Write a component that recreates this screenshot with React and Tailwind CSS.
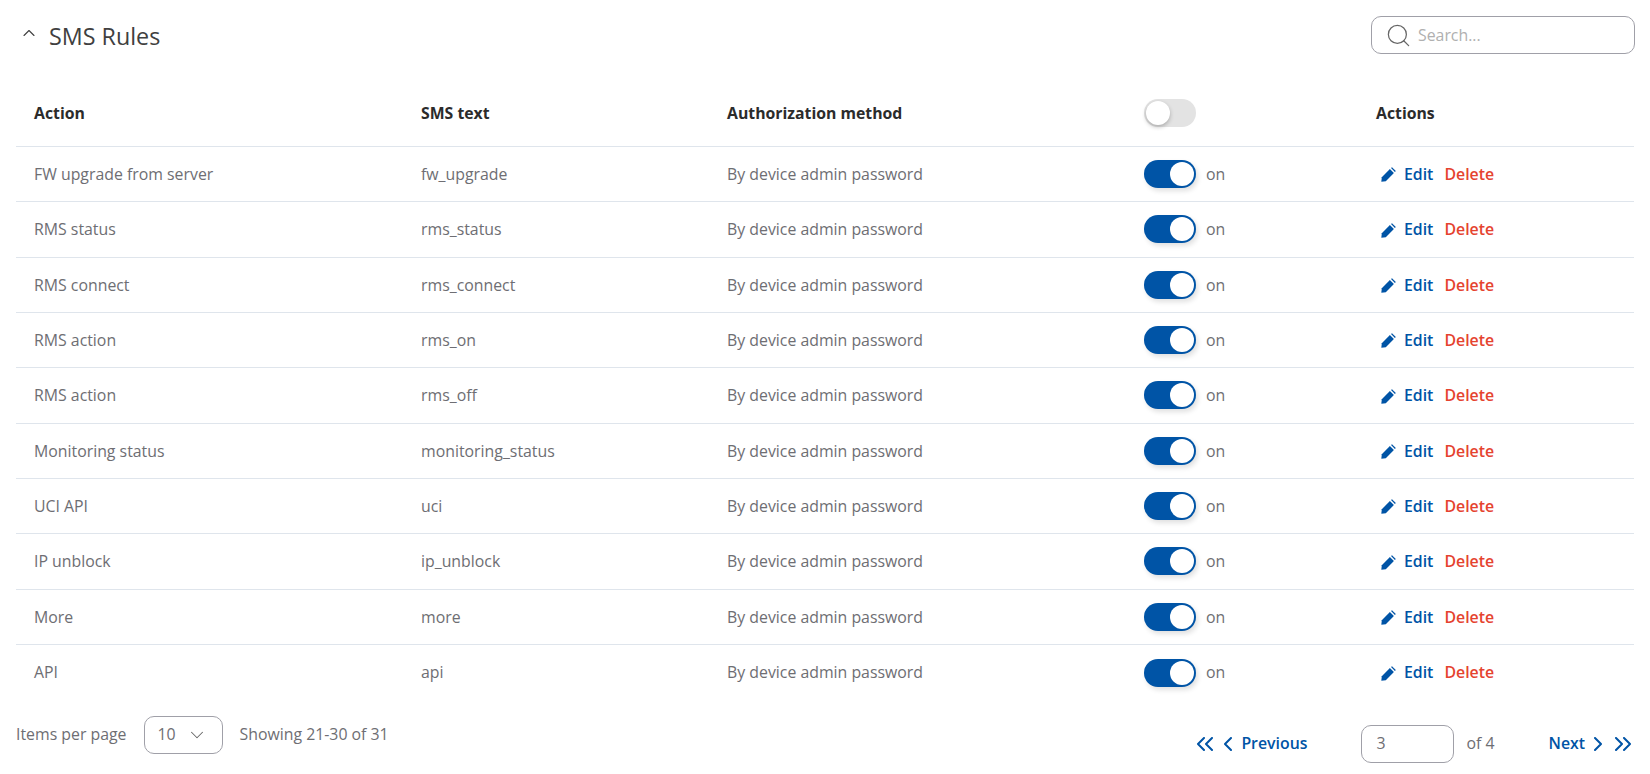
import React from 'react';
import { ChevronUp, ChevronDown, Search } from 'lucide-react';

const rows = [
  ['FW upgrade from server', 'fw_upgrade'],
  ['RMS status', 'rms_status'],
  ['RMS connect', 'rms_connect'],
  ['RMS action', 'rms_on'],
  ['RMS action', 'rms_off'],
  ['Monitoring status', 'monitoring_status'],
  ['UCI API', 'uci'],
  ['IP unblock', 'ip_unblock'],
  ['More', 'more'],
  ['API', 'api'],
];

const PencilIcon = () => (
  <svg width="15" height="15" viewBox="0 0 15 15" className="fill-[#0054a6]">
    <path d="M0.3 14.7 L0.8 10.2 L8.9 2.1 L12.9 6.1 L4.8 14.2 Z" />
    <path d="M10 1.1 L11 0.2 L14.8 4 L13.9 5 Z" />
  </svg>
);

// double and single pagination arrows, drawn a bit wider than the lucide ones
const Arrow = ({ d, width }) => (
  <svg width={width} height="14" viewBox={`0 0 ${width} 14`} fill="none" stroke="#0054a6" strokeWidth="2" strokeLinecap="round" strokeLinejoin="round">
    <path d={d} />
  </svg>
);

const Toggle = ({ on }) => (
  <span
    className={`relative block w-[52px] h-[28px] rounded-full ${on ? 'bg-[#0054a6] shadow-[2px_3px_5px_rgba(0,0,0,0.12)]' : 'bg-[#e3e3e3]'}`}
  >
    <span
      className={`absolute top-[2px] w-[24px] h-[24px] rounded-full bg-white ${on ? 'right-[2px]' : 'left-[2px] shadow-[0_2px_4px_rgba(0,0,0,0.25)]'}`}
    />
  </span>
);

const gridCols = 'grid grid-cols-[387px_306px_417px_232px_1fr] items-center pl-[18px]';

export default function App() {
  return (
    <div className="min-h-screen bg-white px-4 font-['Open_Sans',sans-serif] text-[15.85px] text-[#6e6e73]">
      {/* Header */}
      <div className="flex items-center justify-between h-[70px]">
        <div className="flex items-center">
          <ChevronUp size={20} strokeWidth={1.3} className="text-[#404040] ml-[3px] mr-[10px] -mt-[5px]" />
          <h2 className="text-[23.3px] font-medium text-[#404040] mt-[2px]">SMS Rules</h2>
        </div>
        <div className="flex items-center w-[264px] h-[38px] border border-[#a0a0a8] rounded-[10px] pl-[13px] -mr-[1px]">
          <Search size={27} strokeWidth={1.1} className="text-[#666] mr-[6px]" />
          <span className="text-[#b0b0b0] pt-[1px]">Search...</span>
        </div>
      </div>

      {/* Table */}
      <div className={`${gridCols} h-[77px] pt-[10px] border-b border-[#dfe5ec] font-bold text-[#2b2b2b] text-[15.8px]`}>
        <div className="pt-[1px]">Action</div>
        <div className="pt-[1px]">SMS text</div>
        <div className="pt-[1px]">Authorization method</div>
        <div><Toggle on={false} /></div>
        <div className="pt-[1px]">Actions</div>
      </div>
      {rows.map((row, index) => (
        <div
          key={index}
          className={`${gridCols} h-[55.33px] ${index < rows.length - 1 ? 'border-b border-[#dfe5ec]' : ''}`}
        >
          <div className="pt-[1.5px]">{row[0]}</div>
          <div className="pt-[1.5px]">{row[1]}</div>
          <div className="pt-[1.5px]">By device admin password</div>
          <div className="flex items-center gap-[10px]">
            <Toggle on />
            <span className="pt-[1.5px]">on</span>
          </div>
          <div className="flex items-center font-semibold pt-[1.5px]">
            <span className="ml-[5px] mr-[8px]"><PencilIcon /></span>
            <span className="text-[#0054a6]">Edit</span>
            <span className="ml-[11px] text-[#e5432f]">Delete</span>
          </div>
        </div>
      ))}

      {/* Pagination */}
      <div className="flex items-start justify-between mt-[3px]">
        <div className="flex items-center mt-[13px]">
          <span>Items per page</span>
          <div className="flex items-center w-[79px] h-[38px] ml-[18px] mr-[16px] border border-[#a0a0a8] rounded-[10px] pl-[12px]">
            <span>10</span>
            <ChevronDown size={22} strokeWidth={1.1} className="ml-[10px] text-[#666]" />
          </div>
          <span>Showing 21-30 of 31</span>
        </div>
        <div className="flex items-center mt-[22px] text-[#0054a6] font-semibold mr-[2px]">
          <Arrow width={18} d="M8 1 L2 7 L8 13 M16 1 L10 7 L16 13" />
          <span className="ml-[10px]"><Arrow width={8} d="M7 1 L1 7 L7 13" /></span>
          <span className="ml-[9px]">Previous</span>
          <div className="flex items-center w-[93px] h-[38px] ml-[54px] border border-[#a0a0a8] rounded-[10px] pl-[14px] font-normal text-[#6e6e73]">3</div>
          <span className="ml-[12px] font-normal text-[#6e6e73]">of 4</span>
          <span className="ml-[54px]">Next</span>
          <span className="ml-[9px]"><Arrow width={8} d="M1 1 L7 7 L1 13" /></span>
          <span className="ml-[12px]"><Arrow width={18} d="M2 1 L8 7 L2 13 M10 1 L16 7 L10 13" /></span>
        </div>
      </div>
    </div>
  );
}
